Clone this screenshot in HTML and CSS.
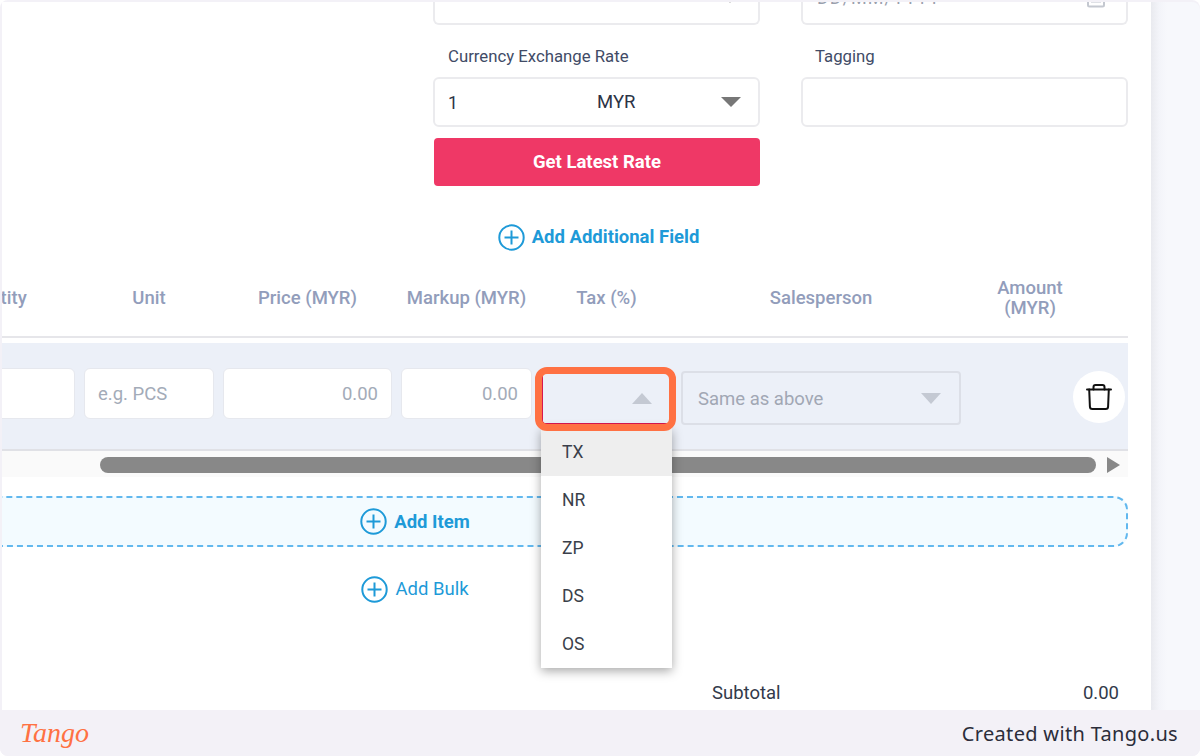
FILE: index.html
```html
<!DOCTYPE html>
<html lang="en">
<head>
<meta charset="utf-8">
<title>Tax dropdown</title>
<link rel="stylesheet" href="styles.css">
</head>
<body>
<div class="shot">
  <div class="viewport">
    <main class="page">
      <section class="form-grid">
        <div class="field-box stub"><svg class="stub-arrow" width="10" height="5" viewBox="0 0 10 5"><path d="M2 0l3 3 3-3" fill="none" stroke="#bbb" stroke-width="1.5"/></svg></div>
        <div class="field-box stub"><span class="stub-text">DD/MM/YYYY</span><svg class="stub-cal" width="18" height="8" viewBox="0 0 18 8"><path d="M1 0v5a1.500 1.500 0 0 0 1.500 1.500h13A1.500 1.500 0 0 0 17 5V0" fill="none" stroke="#c4c8d0" stroke-width="2"/><path d="M4 0h10v3H4z" fill="#dfe1e6"/></svg></div>
        <div class="field">
          <label class="field-label">Currency Exchange Rate</label>
          <div class="field-box rate"><span class="rate-value">1</span><span class="rate-cur">MYR</span><span class="tri tri-dark"></span></div>
          <button class="rate-btn">Get Latest Rate</button>
        </div>
        <div class="field">
          <label class="field-label tag-label">Tagging</label>
          <div class="field-box"></div>
        </div>
      </section>

      <div class="add-field">
        <a class="add-link strong">
          <svg class="plus" viewBox="0 0 27 27"><circle cx="13.500" cy="13.500" r="12.200" fill="none" stroke="currentColor" stroke-width="2"/><path d="M13.500 6.500v14M6.500 13.500h14" stroke="currentColor" stroke-width="2"/></svg>
          Add Additional Field
        </a>
      </div>

      <section class="table">
        <div class="cols head">
          <div class="th th-qty">Quantity</div>
          <div class="th">Unit</div>
          <div class="th">Price (MYR)</div>
          <div class="th">Markup (MYR)</div>
          <div class="th">Tax (%)</div>
          <div class="th">Salesperson</div>
          <div class="th th-amount">Amount<br>(MYR)</div>
        </div>
        <div class="band">
          <div class="cols">
            <div class="cell-input qty"></div>
            <div class="cell-input ph">e.g. PCS</div>
            <div class="cell-input num">0.00</div>
            <div class="cell-input num">0.00</div>
            <div class="tax-cell">
              <div class="select tax"><span class="tri tri-up"></span></div>
              <div class="menu">
                <div class="menu-item active">TX</div>
                <div class="menu-item">NR</div>
                <div class="menu-item">ZP</div>
                <div class="menu-item">DS</div>
                <div class="menu-item">OS</div>
              </div>
              <div class="highlight"></div>
            </div>
            <div class="select sales"><span class="sales-text">Same as above</span><span class="tri tri-light"></span></div>
            <div class="trash-cell">
              <div class="trash">
                <svg width="26" height="26" viewBox="0 0 26 26" fill="none" stroke="#111" stroke-width="2" stroke-linejoin="round" stroke-linecap="round"><path d="M1 5.500h24"/><path d="M3.200 5.500l.7 17a2.500 2.500 0 0 0 2.500 2.500h13.200a2.500 2.500 0 0 0 2.500-2.500l.7-17"/><path d="M7.500 5.500V3a2 2 0 0 1 2-2h7a2 2 0 0 1 2 2v2.500"/></svg>
              </div>
            </div>
          </div>
        </div>
        <div class="scrollbar">
          <div class="thumb"></div>
          <span class="scroll-arrow"></span>
        </div>
      </section>

      <div class="add-item">
        <a class="add-link strong">
          <svg class="plus" viewBox="0 0 27 27"><circle cx="13.500" cy="13.500" r="12.200" fill="none" stroke="currentColor" stroke-width="2"/><path d="M13.500 6.500v14M6.500 13.500h14" stroke="currentColor" stroke-width="2"/></svg>
          Add Item
        </a>
      </div>
      <div class="add-bulk">
        <a class="add-link">
          <svg class="plus" viewBox="0 0 27 27"><circle cx="13.500" cy="13.500" r="12.200" fill="none" stroke="currentColor" stroke-width="2"/><path d="M13.500 6.500v14M6.500 13.500h14" stroke="currentColor" stroke-width="2"/></svg>
          Add Bulk
        </a>
      </div>
      <div class="subtotal"><span>Subtotal</span><span>0.00</span></div>
    </main>
    <aside class="side"></aside>
  </div>
  <footer class="footer">
    <span class="brand">Tango</span>
    <span class="credit">Created with Tango.us</span>
  </footer>
</div>
</body>
</html>
```
FILE: styles.css
```css
* { box-sizing: border-box; }
html, body { margin: 0; height: 100%; background: #fff; }
body { font-family: Roboto, "Liberation Sans", sans-serif; overflow: hidden; }

.shot { width: 1200px; height: 756px; display: flex; flex-direction: column; background: #f3f1f7; border-radius: 8px; overflow: hidden; padding-top: 2px; }
.viewport { flex: 1; min-height: 0; display: flex; padding-left: 2px; overflow: hidden; }
.page { width: 1149px; flex: none; background: #fff; overflow: hidden; }
.side { flex: 1; background: linear-gradient(90deg, #e9eaef 0, #f3f4f9 8px, #f7f8fc 16px); border-top-right-radius: 8px; }

.form-grid { margin-left: 431px; width: 695px; display: grid; grid-template-columns: 327px 327px; column-gap: 41px; }
.field-box { height: 50px; background: #fff; border: 2px solid #ebebee; border-radius: 6px; position: relative; }
.stub { height: 23px; border-top: 0; border-radius: 0 0 6px 6px; overflow: hidden; }
.stub-arrow { position: absolute; right: 23px; top: -3px; }
.stub-text { position: absolute; left: 14px; top: -14px; font-size: 18px; line-height: 20px; color: #9aa0ad; letter-spacing: 1px; }
.stub-cal { position: absolute; right: 21px; top: -2px; }
.field-label { display: block; padding: 21px 0 11px 15px; font-size: 16.750px; line-height: 20px; color: #414b66; }
.tag-label { padding-left: 14px; }
.rate { display: flex; align-items: center; font-size: 17.500px; color: #2c3345; }
.rate-value { margin-left: 13px; width: 149px; padding-top: 2px; }
.rate-cur { font-size: 18.500px; }
.tri { width: 0; height: 0; border-left: 10px solid transparent; border-right: 10px solid transparent; position: absolute; }
.tri-dark { border-top: 10px solid #777; right: 17px; top: 18px; }
.tri-up { border-bottom: 11px solid #c4c9d3; right: 18px; top: 20px; }
.tri-light { border-top: 11px solid #c4c9d3; right: 18px; top: 20px; }
.rate-btn { display: block; width: 326px; height: 48px; margin: 11px 0 0 1px; border: 0; border-radius: 4px; background: #ef3866; color: #fff; font: 700 18.500px Roboto, sans-serif; }

.add-field { margin: 37px 0 0 431px; width: 327px; height: 28px; padding-left: 4px; display: flex; justify-content: center; }
.add-link { display: inline-flex; align-items: center; gap: 7px; color: #1e9ad8; font-size: 18.500px; line-height: 28px; white-space: nowrap; font-weight: 400; }
.add-link.strong { font-weight: 700; }
.plus { width: 27px; height: 27px; flex: none; }

.table { width: 1126px; }
.cols { display: grid; grid-template-columns: 73px 130px 169px 131px 131px 280px 1fr; column-gap: 9px; }
.head { margin-top: 11px; height: 76px; align-items: center; border-bottom: 2px solid #e6e6ea; padding-bottom: 2px; }
.th { text-align: center; font-size: 18.500px; line-height: 20px; font-weight: 500; color: #929dbb; }
.th-qty { margin-left: -93px; }
.th-amount { width: 120px; }
.band { margin-top: 5px; height: 108px; padding-top: 25px; background: #ecf0f8; border-bottom: 2px solid #e0e1e6; }
.cell-input { height: 51px; background: #fff; border: 1px solid #e6e8ee; border-radius: 6px; padding: 0 13px; font-size: 18.500px; line-height: 51px; color: #a3abb8; }
.qty { margin-left: -40px; }
.num { text-align: right; }
.select { height: 54px; margin-top: 3px; position: relative; background: #ecf0f8; border: 2px solid #dcdfe7; border-radius: 4px; }
.tax { border-color: #d9cfe0 #d9cfe0 #d8174f #d8174f; }
.sales-text { display: block; padding-left: 15px; font-size: 18.500px; line-height: 52px; color: #a1a7b4; }
.tax-cell { position: relative; }
.highlight { position: absolute; left: -6px; right: -4px; top: -1px; height: 64px; border: 7px solid #ff7143; border-radius: 12px; z-index: 3; }
.menu { position: absolute; left: 0; right: 0; top: 60px; background: #fff; box-shadow: 0 3px 10px rgba(0,0,0,.35); z-index: 2; }
.menu-item { height: 48px; padding-left: 21px; font-size: 17.500px; line-height: 48px; color: #3a3f4a; background: #fff; }
.menu-item.active { background: #eee; }
.trash-cell { display: flex; justify-content: flex-end; padding-right: 3px; }
.trash { width: 52px; height: 52px; margin-top: 3px; border-radius: 50%; background: #fff; display: flex; align-items: center; justify-content: center; }

.scrollbar { height: 26px; background: #fafafa; position: relative; padding: 6px 0 0 98px; }
.thumb { width: 996px; height: 16px; border-radius: 8px; background: #888; }
.scroll-arrow { position: absolute; left: 1105px; top: 6px; width: 0; height: 0; border-left: 13px solid #888; border-top: 8.500px solid transparent; border-bottom: 8.500px solid transparent; }

.add-item { margin: 19px 0 0 -300px; width: 1426px; height: 51px; display: flex; align-items: center; justify-content: center; background: #f3fbff; border: 2px dashed #62b8ee; border-radius: 14px; }
.add-bulk { margin: 28px 0 0 -300px; width: 1426px; height: 28px; display: flex; justify-content: center; }
.subtotal { margin: 80px 0 0 710px; width: 407px; display: flex; justify-content: space-between; font-size: 18.500px; line-height: 20px; color: #333a4a; }

.footer { height: 46px; flex: none; display: flex; align-items: center; justify-content: space-between; padding: 0 22px 0 20px; background: #f3f1f7; }
.brand { font-family: "Liberation Serif", serif; font-style: italic; font-size: 28px; line-height: 46px; color: #ff7143; }
.credit { font-family: "Noto Sans", sans-serif; font-size: 20px; letter-spacing: .32px; color: #2b2d3a; }
```
